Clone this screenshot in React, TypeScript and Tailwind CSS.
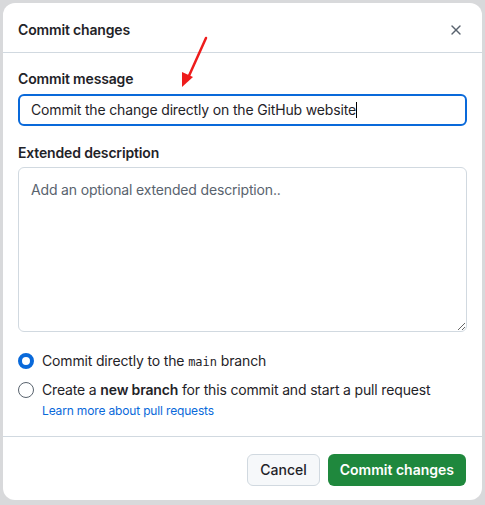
import { X } from 'lucide-react'

export default function App() {
  return (
    <div className="relative w-[485px] h-[505px] bg-[#d8d9db] pt-[3px] pl-[3px] font-['Inter','Liberation_Sans',sans-serif] tracking-[-0.16px] text-[#1f2328]">
      <div className="w-[479px] h-[497px] rounded-xl bg-white flex flex-col">
        {/* Header */}
        <div className="h-[50px] flex items-center justify-between pt-1 pl-[15px] pr-[18px] border-b border-[#d1d9e0]">
          <h2 className="text-sm font-semibold">Commit changes</h2>
          <X className="w-4 h-4 text-[#59636e]" strokeWidth={2} />
        </div>

        {/* Body */}
        <div className="px-[15px] pt-4 flex flex-col">
          <label className="text-sm font-semibold leading-5">Commit message</label>
          <div className="mt-[5px] h-8 rounded-md border-2 border-[#0969da] flex items-center pl-[11px] text-sm">
            Commit the change directly on the GitHub website
            <span className="inline-block w-px h-4 bg-black" />
          </div>

          <label className="mt-[17px] text-sm font-semibold leading-5">Extended description</label>
          <textarea
            className="mt-1 h-[165px] rounded-md border border-[#d1d9e0] px-3 py-3 text-sm leading-5 placeholder:text-[#59636e] outline-none"
            placeholder="Add an optional extended description.."
          />

          <div className="mt-[19px] flex flex-col gap-[9px]">
            <div className="flex items-center gap-2 h-5">
              <span className="w-4 h-4 rounded-full border-[4px] border-[#0969da] bg-white" />
              <span className="text-sm">
                Commit directly to the{' '}
                <code className="font-['DejaVu_Sans_Mono',monospace] text-[12px] tracking-normal">main</code> branch
              </span>
            </div>
            <div className="flex flex-col">
              <div className="flex items-center gap-2 h-5">
                <span className="w-4 h-4 rounded-full border border-[#59636e] bg-white" />
                <span className="text-sm">
                  Create a <span className="font-semibold">new branch</span> for this commit and start a pull request
                </span>
              </div>
              <a className="ml-6 mt-[3px] text-xs leading-4 text-[#0969da]">Learn more about pull requests</a>
            </div>
          </div>
        </div>

        {/* Footer */}
        <div className="mt-[17px] border-t border-[#d1d9e0] flex justify-end gap-2 pt-[17px] pr-4">
          <button className="h-8 px-3 rounded-md border border-[#d1d9e0] bg-[#f6f8fa] text-sm font-medium tracking-normal">
            Cancel
          </button>
          <button className="h-8 px-3 rounded-md bg-[#1f883d] text-white text-sm font-semibold tracking-normal">
            Commit changes
          </button>
        </div>
      </div>

      {/* annotation arrow */}
      <svg className="absolute left-[176px] top-[34px]" width="36" height="58" viewBox="0 0 36 58">
        <line x1="30" y1="4" x2="12" y2="44" stroke="#ee1c1c" strokeWidth="2.5" strokeLinecap="round" />
        <polygon points="6,53 6,38 17,43" fill="#ee1c1c" />
      </svg>
    </div>
  )
}
